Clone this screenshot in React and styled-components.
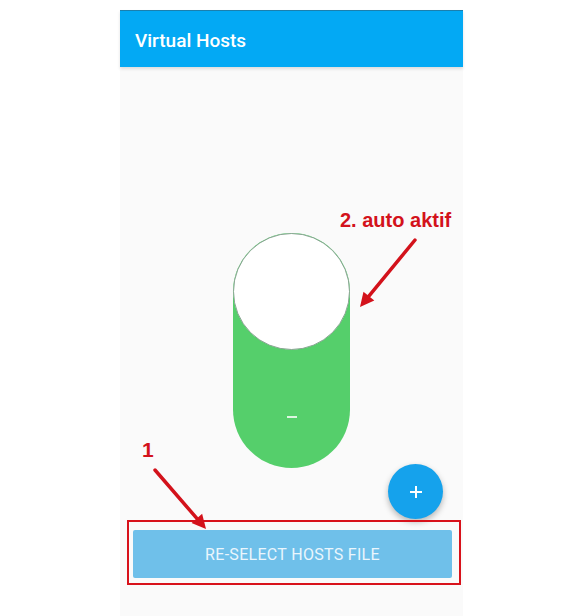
import React from "react";
import styled, { createGlobalStyle } from "styled-components";

const Global = createGlobalStyle`
  html, body { margin: 0; padding: 0; background: #ffffff; }
  body { font-family: Roboto, "Liberation Sans", Arial, sans-serif; }
`;

const Page = styled.div`
  position: relative;
  width: 568px;
  height: 616px;
  overflow: hidden;
  background: #ffffff;
`;

const Screen = styled.div`
  position: relative;
  margin: 10px 0 0 120px;
  width: 343px;
  height: 606px;
  background: #fafafa;
  display: flex;
  flex-direction: column;
`;

const AppBar = styled.header`
  height: 57px;
  background: #03a9f4;
  border-top: 1px solid #1b7fae;
  box-sizing: border-box;
  display: flex;
  align-items: center;
  padding: 3px 15px 0;
  box-shadow: 0 2px 3px rgba(0, 0, 0, 0.12);
  z-index: 1;
`;

const Title = styled.h1`
  margin: 0;
  color: #ffffff;
  font-size: 19px;
  font-weight: 500;
  font-family: Roboto, "Liberation Sans", sans-serif;
`;

const Content = styled.main`
  flex: 1;
  display: flex;
  flex-direction: column;
  align-items: center;
  padding-top: 166px;
`;

const Track = styled.div`
  width: 117px;
  height: 235px;
  border-radius: 59px;
  background: #55cf6b;
  display: flex;
  flex-direction: column;
  align-items: center;
`;

const Knob = styled.div`
  width: 117px;
  height: 117px;
  border-radius: 50%;
  background: #ffffff;
  box-sizing: border-box;
  border: 1.5px solid #8aa593;
`;

const Minus = styled.div`
  width: 10px;
  height: 1.5px;
  margin-top: 66px;
  background: rgba(255, 255, 255, 0.8);
`;

const FabRow = styled.div`
  align-self: stretch;
  display: flex;
  justify-content: flex-end;
  padding-right: 20px;
  margin-top: -4px;
`;

const Fab = styled.button`
  width: 55px;
  height: 55px;
  border-radius: 50%;
  border: none;
  background: #15a2ec;
  color: #ffffff;
  display: flex;
  align-items: center;
  justify-content: center;
  box-shadow: 0 3px 6px rgba(0, 0, 0, 0.28);
  padding: 0;
`;

const Button = styled.button`
  margin: 11px 11px 0 13px;
  align-self: stretch;
  height: 48px;
  border: none;
  border-radius: 2px;
  background: #6fc0ea;
  color: #eaf6fd;
  font-family: Roboto, "Liberation Sans", sans-serif;
  font-size: 16px;
  font-weight: 400;
  letter-spacing: 0.3px;
  text-transform: uppercase;
`;

const Overlay = styled.svg`
  position: absolute;
  left: 0;
  top: 0;
  width: 568px;
  height: 616px;
  pointer-events: none;
`;

const Note = styled.div`
  position: absolute;
  left: ${(p) => p.x}px;
  top: ${(p) => p.y}px;
  color: #d3121b;
  font-family: "Liberation Sans", Arial, sans-serif;
  font-weight: 700;
  font-size: ${(p) => p.size}px;
  white-space: nowrap;
  line-height: 1;
`;

const Frame = styled.div`
  position: absolute;
  left: 127px;
  top: 520px;
  width: 334px;
  height: 65px;
  box-sizing: border-box;
  border: 2.5px solid #d8121b;
`;

function Arrow({ x1, y1, x2, y2 }) {
  const dx = x2 - x1;
  const dy = y2 - y1;
  const len = Math.hypot(dx, dy);
  const ux = dx / len;
  const uy = dy / len;
  const hl = 14;
  const hw = 7;
  const bx = x2 - ux * hl;
  const by = y2 - uy * hl;
  const px = -uy;
  const py = ux;
  return (
    <g>
      <line x1={x1} y1={y1} x2={bx} y2={by} stroke="#d3121b" strokeWidth="3.5" strokeLinecap="round" />
      <polygon
        points={`${x2},${y2} ${bx + px * hw},${by + py * hw} ${bx - px * hw},${by - py * hw}`}
        fill="#d3121b"
      />
    </g>
  );
}

export default function App() {
  return (
    <Page>
      <Global />
      <Screen>
        <AppBar>
          <Title>Virtual Hosts</Title>
        </AppBar>
        <Content>
          <Track>
            <Knob />
            <Minus />
          </Track>
          <FabRow>
            <Fab aria-label="add">
              <svg width="16" height="16" viewBox="0 0 16 16">
                <path d="M8 2v12M2 8h12" stroke="#ffffff" strokeWidth="2" />
              </svg>
            </Fab>
          </FabRow>
          <Button>Re-select hosts file</Button>
        </Content>
      </Screen>
      <Frame />
      <Note x={340} y={210} size={20}>2. auto aktif</Note>
      <Note x={142} y={439} size={21}>1</Note>
      <Overlay viewBox="0 0 568 616">
        <Arrow x1={415} y1={240} x2={360} y2={307} />
        <Arrow x1={155} y1={470} x2={206} y2={529} />
      </Overlay>
    </Page>
  );
}
